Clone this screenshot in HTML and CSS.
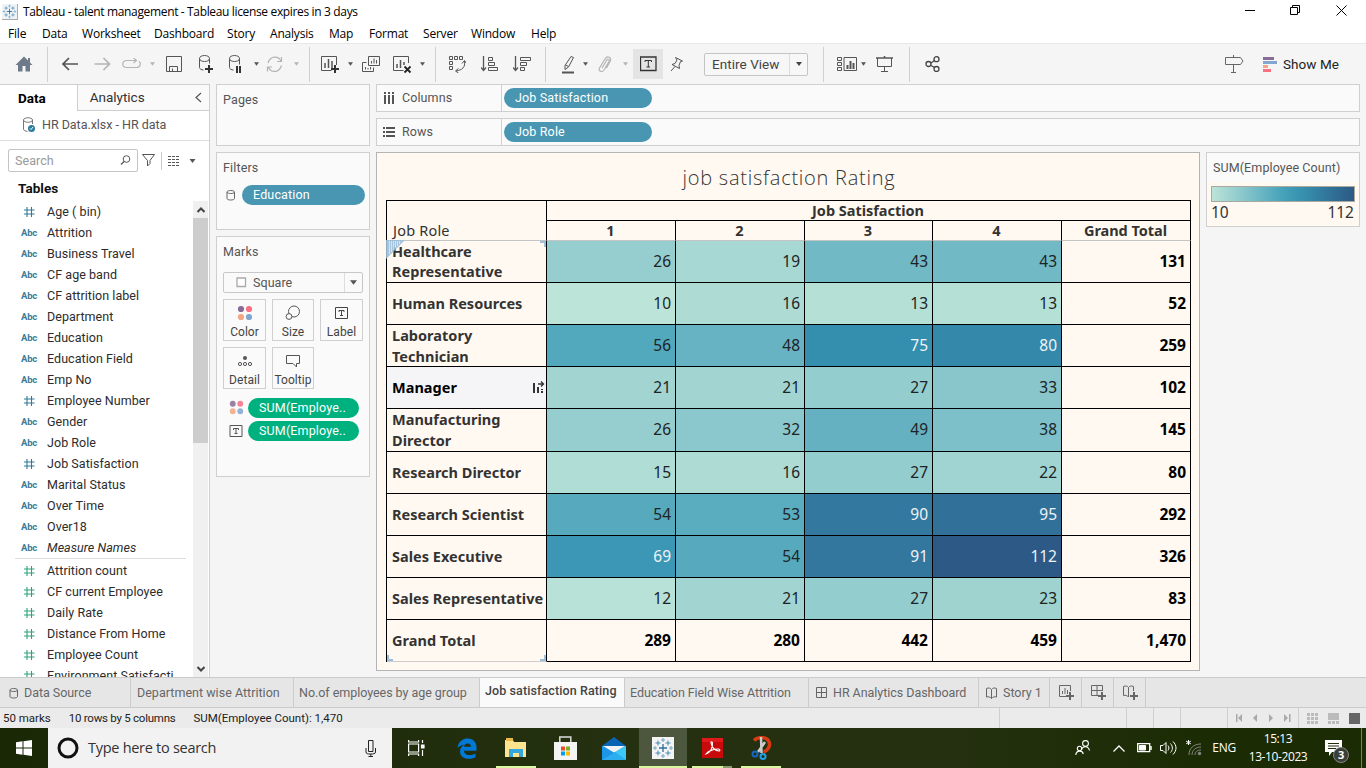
FILE: index.html
```html
<!DOCTYPE html>
<html lang="en">
<head>
<meta charset="utf-8">
<title>Tableau - talent management</title>
<link rel="stylesheet" href="styles.css">
</head>
<body>
<svg class="defs" width="0" height="0">
  <defs>
    <symbol id="caret" viewBox="0 0 6 4"><path d="M0 0h6L3 4z" fill="currentColor"/></symbol>
    <symbol id="hash" viewBox="0 0 12 12"><path d="M4 1v10M8.500 1v10M1 4h10.500M1 8h10.500" stroke="currentColor" fill="none" stroke-width="1.1"/></symbol>
    <symbol id="cyl" viewBox="0 0 10 12"><path d="M1 3v6.500c0 2 7.500 2 7.500 0V3M1 3c0-2 7.500-2 7.500 0s-7.500 2-7.500 0" stroke="currentColor" fill="none"/></symbol>
    <symbol id="dots" viewBox="0 0 16 16"><circle cx="4" cy="4" r="3.100" fill="#876d96"/><circle cx="12" cy="4" r="3.100" fill="#fa7082"/><circle cx="4" cy="12" r="3.100" fill="#f4a582"/><circle cx="12" cy="12" r="3.100" fill="#82a6d0"/></symbol>
    <symbol id="tbox" viewBox="0 0 14 12"><path d="M.5.5h12v11H.5z M4 5V3.500h5V5M6.500 3.500v5M5 8.500h3" stroke="currentColor" fill="none"/></symbol>
    <symbol id="grid4" viewBox="0 0 12 12"><path d="M.5.5h10v10H.5zM5.500.5v10M.5 5.500h10" stroke="currentColor" fill="none"/></symbol>
    <symbol id="book" viewBox="0 0 12 12"><path d="M.5 1.500c2-1 4-.5 5 1 1-1.500 3-2 5-1v8.500c-2-.5-4 0-5 1.500-1-1.500-3-2-5-1.500zM5.500 2.500v9" stroke="currentColor" fill="none"/></symbol>
    <symbol id="tabl" viewBox="0 0 22 22"><path d="M11 7v8M7 11h8" stroke="#2f6f98" stroke-width="1.300"/><path d="M6 3.500v5M3.500 6h5M16 3.500v5M13.500 6h5M6 13.500v5M3.500 16h5M16 13.500v5M13.500 16h5" stroke="#4a86b0"/><path d="M11 1v4M9 3h4M11 17v4M9 19h4M3 9v4M1 11h4M19 9v4M17 11h4" stroke="#74a6c4"/></symbol>
  </defs>
</svg>

<header class="titlebar">
  <svg class="applogo" width="16" height="16"><use href="#tabl" width="15" height="15"/></svg>
  <span class="apptitle">Tableau - talent management - Tableau license expires in 3 days</span>
  <svg class="winctl" width="106" height="16" fill="none" stroke="#000"><path d="M0 8.500h10M45.500 5.500h7v7h-7zM47.500 5.500v-2h7v7h-2"/><path d="M91.500 3.500l10 10M101.500 3.500l-10 10"/></svg>
</header>
<nav class="menubar"><span>File</span><span>Data</span><span>Worksheet</span><span>Dashboard</span><span>Story</span><span>Analysis</span><span>Map</span><span>Format</span><span>Server</span><span>Window</span><span>Help</span></nav>

<div class="toolbar">
  <div><svg width="18" height="16"><path d="M9 .5L.5 9H3v6.500h4.500V10h3v5.500H15V9h2.500L15 6.500V2h-2v2.500z" fill="#6d7a8a"/></svg></div>
  <div class="sep"></div>
  <div><svg width="17" height="14" fill="none" stroke="#555" stroke-width="1.700"><path d="M16 7H1M7 1L1 7l6 6"/></svg></div>
  <div class="faint"><svg width="17" height="14" fill="none" stroke="currentColor" stroke-width="1.700"><path d="M.5 7h15M9.500 1l6 6-6 6"/></svg></div>
  <div class="faint"><svg width="19" height="12" fill="none" stroke="currentColor" stroke-width="1.200"><path d="M11 2.500H4.500c-5 0-5 7 0 7h10c4.500 0 4.500-5 2.500-6M9 2.500h5M11.500 0l3 2.500-3 2.500"/></svg></div>
  <div class="faint"><svg width="5" height="4"><use href="#caret"/></svg></div>
  <div><svg width="17" height="17" fill="none" stroke="#555"><path d="M.5.500h15v15H.5zM3.500 15.500v-5h8v5M6.500 15.500v-3"/></svg></div>
  <div><svg width="16" height="18" fill="none" stroke="#555"><path d="M1.500 3.500c0-4 10-4 10 0s-10 4-10 0v9c0 1.500 2 2.500 4 2.500M11.500 3.500v5"/><path d="M11 10v8M7 14h8" stroke="#333" stroke-width="2"/></svg></div>
  <div><svg width="14" height="18" fill="none" stroke="#555"><path d="M1.500 3.500c0-4 10-4 10 0s-10 4-10 0v9c0 1.500 2 2.500 4 2.500M11.500 3.500v6"/><path d="M9 11v7M12 11v7" stroke="#333" stroke-width="2"/></svg></div>
  <div><svg width="5" height="4"><use href="#caret"/></svg></div>
  <div class="faint"><svg width="18" height="17" fill="none" stroke="currentColor" stroke-width="1.200"><path d="M2 7C4 0 12-1 15 5M15.500 1v4.500H11M15.500 9.500c-2 7-10 8-13 2M1.500 15.500V11H6"/></svg></div>
  <div class="faint"><svg width="5" height="4"><use href="#caret"/></svg></div>
  <div><i class="sep"></i></div>
  <div><svg width="20" height="19" fill="none" stroke="#555"><path d="M16.500 10V1.500H1.500v14h10"/><path d="M5 8v5M8.500 4v9M12 6v7" stroke-width="1.500"/><path d="M15 10v8M11 14h8" stroke="#333" stroke-width="2"/></svg></div>
  <div><svg width="5" height="4"><use href="#caret"/></svg></div>
  <div><svg width="18" height="17" fill="none" stroke="#555"><path d="M6.500.5h11v9h-11zM4.500 6.500H.5v9h11v-4M9.500 5v2.500M12 2.500v5M14.500 4v3.500M3.500 11v2.500M6 12v1.500M8.500 11v2.500"/></svg></div>
  <div><svg width="20" height="19" fill="none" stroke="#555"><path d="M16.500 8V1.500H1.500v14h10"/><path d="M5 9v4M8.500 5v8M12 7v3" stroke-width="1.500"/><path d="M12.500 11.500l6 6M18.500 11.500l-6 6" stroke="#222" stroke-width="1.800"/></svg></div>
  <div><svg width="5" height="4"><use href="#caret"/></svg></div>
  <div><i class="sep"></i></div>
  <div><svg width="17" height="17" fill="none" stroke="#555"><path d="M.5.5h3v3h-3zM5.500.5h3v3h-3zM10.500.5h3v3h-3zM.5 5.500h3v3h-3zM.5 10.500h3v3h-3zM15.500 5c1 6-2 9-8.500 10M13 7.500l2.500-3 2 3M9.500 12.500l-3 2.500 3 2"/></svg></div>
  <div><svg width="18" height="16" fill="none" stroke="#555"><path d="M2.500 0v14M0 11.500l2.500 3 2.500-3" stroke-width="1.300"/><path d="M7.500 1.500h4v3h-4zM7.500 6.500h6v3h-6zM7.500 11.500h9v3h-9z"/></svg></div>
  <div><svg width="18" height="16" fill="none" stroke="#555"><path d="M2.500 0v14M0 11.500l2.500 3 2.500-3" stroke-width="1.300"/><path d="M7.500 1.500h10v3h-10zM7.500 6.500h6v3h-6zM7.500 11.500h4v3h-4z"/></svg></div>
  <div><i class="sep"></i></div>
  <div><svg width="13" height="19" fill="none" stroke="#555"><path d="M9 1.500l2.500 1-5 9.500-3.500 2.500v-4zM3.500 10l3 1.500"/><path d="M0 17.500h12" stroke-width="2"/></svg></div>
  <div><svg width="5" height="4"><use href="#caret"/></svg></div>
  <div class="faint"><svg width="14" height="17" fill="none" stroke="currentColor" stroke-width="1.200"><path d="M4 12l4.500-7.500c1-2 3.500-1 2.500 1L6 14c-2 3-6 1-4.500-2L7 3c2.500-4 7-1.500 5 2.500L8.500 12"/></svg></div>
  <div class="faint"><svg width="5" height="4"><use href="#caret"/></svg></div>
  <div><span class="active"><svg width="17" height="16" fill="none" stroke="#333"><path d="M.5 1h15.500v13.500H.5z" stroke-width="1.300"/><path d="M5 6V4.500h6.500V6M8.300 4.500V11M6.500 11h3.500"/></svg></span></div>
  <div><svg width="14" height="16" fill="none" stroke="#555"><path d="M5.500 1.500l7 3.500-2 .5-1.500 4 .5 3-7.500-4 3-1L7 4zM5 10.500L1 15"/></svg></div>
  <div class="end"><span class="select"><span>Entire View</span><b><svg width="6" height="4"><use href="#caret"/></svg></b></span></div>
  <div><i class="sep"></i></div>
  <div><svg width="20" height="15" fill="none" stroke="#555"><path d="M.5.5h4v3h-4zM.5 5.500h4v3h-4zM.5 10.500h4v3h-4zM7 .5h12.500v13H7z"/><path d="M10.500 8v4M13.500 4v8M16.500 6v6" stroke-width="2"/></svg></div>
  <div><svg width="5" height="4"><use href="#caret"/></svg></div>
  <div><svg width="18" height="16" fill="none" stroke="#555"><path d="M0 2h17M8.500 0v2" stroke-width="1.500"/><path d="M1.500 2v8.500h14V2M8.500 10.500v5M5 15.500h7"/></svg></div>
  <div><i class="sep"></i></div>
  <div><svg width="15" height="16" fill="none" stroke="#444" stroke-width="1.300"><circle cx="3.500" cy="8" r="2.500"/><circle cx="11.500" cy="3.200" r="2.500"/><circle cx="11.500" cy="13" r="2.500"/><path d="M6 7l3.500-2.500M6 9.500l3.500 2"/></svg></div>
  <div></div>
  <div><svg width="19" height="18" fill="none" stroke="#666"><path d="M.5 2.500h15l2.500 3.500-2.500 3.500H.5zM8.500 0v2.500M8.500 9.500v8M6 17.500h5"/></svg></div>
  <div class="showme"><svg width="14" height="15"><path d="M0 0h11v3H0z" fill="#876d96"/><path d="M0 4h14v3H0z" fill="#82a6d0"/><path d="M0 8h5v3H0z" fill="#f4a582"/><path d="M0 12h8v3H0z" fill="#fa7082"/></svg><span>Show Me</span></div>
</div>

<main class="work">
  <aside class="side">
    <div class="sidetabs"><b>Data</b><span>Analytics</span><svg width="7" height="10" fill="none" stroke="#555" stroke-width="1.200"><path d="M7 0L2 4.500 7 9"/></svg></div>
    <div class="source"><svg width="15" height="16" fill="none" stroke="#777"><path d="M1.500 3c0-3 9-3 9 0s-9 3-9 0v9c0 1.500 2 2 4 2.500M10.500 3v4"/><circle cx="9.500" cy="11.500" r="3.500" fill="#2f7d9e" stroke="none"/><path d="M8 11.500l1 1 2-2.500" stroke="#fff"/></svg><span>HR Data.xlsx - HR data</span></div>
    <div class="searchrow"><div class="search"><span>Search</span><svg width="11" height="11" fill="none" stroke="#555"><circle cx="6.500" cy="4" r="3.300"/><path d="M4 6.500L1 9.500" stroke-width="1.200"/></svg></div>
      <svg class="funnel" width="14" height="13" fill="none" stroke="#555"><path d="M.5.5h12L8 6.500v3L5.500 12V6.500z"/></svg><i></i>
      <svg class="lines" width="12" height="10" stroke="#555"><path d="M0 .5h12M0 3.500h12M0 6.500h12M0 9.500h12" stroke-dasharray="3 1"/></svg><svg class="lc" width="7" height="4"><use href="#caret" width="7" height="4"/></svg></div>
    <h3>Tables</h3>
    <div class="fields">
      <div class="list">
        <p><svg><use href="#hash"/></svg>Age ( bin)</p>
        <p><i>Abc</i>Attrition</p>
        <p><i>Abc</i>Business Travel</p>
        <p><i>Abc</i>CF age band</p>
        <p><i>Abc</i>CF attrition label</p>
        <p><i>Abc</i>Department</p>
        <p><i>Abc</i>Education</p>
        <p><i>Abc</i>Education Field</p>
        <p><i>Abc</i>Emp No</p>
        <p><svg><use href="#hash"/></svg>Employee Number</p>
        <p><i>Abc</i>Gender</p>
        <p><i>Abc</i>Job Role</p>
        <p><svg><use href="#hash"/></svg>Job Satisfaction</p>
        <p><i>Abc</i>Marital Status</p>
        <p><i>Abc</i>Over Time</p>
        <p><i>Abc</i>Over18</p>
        <p><i>Abc</i><em>Measure Names</em></p>
        <div class="rule"></div>
        <p class="g"><svg><use href="#hash"/></svg>Attrition count</p>
        <p class="g"><svg><use href="#hash"/></svg>CF current Employee</p>
        <p class="g"><svg><use href="#hash"/></svg>Daily Rate</p>
        <p class="g"><svg><use href="#hash"/></svg>Distance From Home</p>
        <p class="g"><svg><use href="#hash"/></svg>Employee Count</p>
        <p class="g"><svg><use href="#hash"/></svg>Environment Satisfacti</p>
      </div>
      <div class="scroll"><div class="sbtn"><svg width="8" height="6" fill="none" stroke="#444" stroke-width="2"><path d="M.5 5L4 1.500 7.500 5"/></svg></div><div class="thumb"></div><div class="sbtn last"><svg width="8" height="6" fill="none" stroke="#444" stroke-width="2"><path d="M.5 1L4 4.500 7.500 1"/></svg></div></div>
    </div>
  </aside>

  <section class="cards">
    <div class="card pages"><h4>Pages</h4></div>
    <div class="card filters"><h4>Filters</h4><div class="frow"><svg width="10" height="12"><use href="#cyl"/></svg><span class="pill">Education</span></div></div>
    <div class="card marks"><h4>Marks</h4>
      <div class="marktype"><svg width="11" height="11"><path d="M1 1h8.500v8.500H1z" fill="#fff" stroke="#aaa" stroke-width="1.300"/></svg><span>Square</span><b><svg width="7" height="5" viewBox="0 0 6 4"><path d="M0 0h6L3 4z" fill="#555"/></svg></b></div>
      <div class="btns">
        <div><svg width="16" height="16"><use href="#dots"/></svg><span>Color</span></div>
        <div><svg width="16" height="16" fill="none" stroke="#555"><circle cx="9" cy="6.500" r="5.500"/><circle cx="4" cy="11.500" r="2.900" fill="#fafafa"/></svg><span>Size</span></div>
        <div><svg width="14" height="16" viewBox="0 -2 14 16"><use href="#tbox" width="14" height="12"/></svg><span>Label</span></div>
        <div><svg width="16" height="16" fill="none" stroke="#555"><circle cx="8" cy="5" r="2" fill="#555" stroke="none"/><circle cx="3" cy="11" r="1.600"/><circle cx="8" cy="11" r="1.600"/><circle cx="13" cy="11" r="1.600"/></svg><span>Detail</span></div>
        <div><svg width="16" height="16" fill="none" stroke="#555"><path d="M1.500 2.500h13v8h-3v3.500L8 10.500H1.500z"/></svg><span>Tooltip</span></div>
      </div>
      <div class="mrow"><svg width="15" height="15" opacity=".85"><use href="#dots"/></svg><span class="pill green">SUM(Employe..</span></div>
      <div class="mrow"><svg width="14" height="12"><use href="#tbox"/></svg><span class="pill green">SUM(Employe..</span></div>
    </div>
  </section>

  <section class="sheet">
    <div class="shelf"><div class="shelflabel"><svg width="12" height="12" stroke="#555" stroke-width="2"><path d="M2 0v2M6 0v2M10 0v2M2 3v9M6 3v9M10 3v9"/></svg>Columns</div><span class="pill">Job Satisfaction</span></div>
    <div class="shelf"><div class="shelflabel"><svg width="12" height="12" stroke="#555" stroke-width="2"><path d="M0 2h2M3 2h9M0 6h2M3 6h9M0 10h2M3 10h9"/></svg>Rows</div><span class="pill">Job Role</span></div>
    <div class="lower">
      <div class="viz">
        <h1>job satisfaction Rating</h1>
        <div class="xtab">
          <div class="corner">Job Role</div><div class="head top">Job Satisfaction</div>
          <div class="head">1</div><div class="head">2</div><div class="head">3</div><div class="head">4</div><div class="head">Grand Total</div>
          <div class="row first"><svg class="sel" width="20" height="20"><path d="M0 0h19L0 19z" fill="#9dbfdc"/><path d="M3.500 1v13M5.500 1v11M7.500 1v9M9.500 1v7M11.500 1v5M13.500 1v3" stroke="#d2e2ef"/></svg><span class="mk tr"></span>Healthcare<br>Representative</div><div class="c v26">26</div><div class="c v19">19</div><div class="c v43">43</div><div class="c v43">43</div><div class="t">131</div>
          <div class="row">Human Resources</div><div class="c v10">10</div><div class="c v16">16</div><div class="c v13">13</div><div class="c v13">13</div><div class="t">52</div>
          <div class="row two">Laboratory<br>Technician</div><div class="c v56">56</div><div class="c v48">48</div><div class="c w v75">75</div><div class="c w v80">80</div><div class="t">259</div>
          <div class="row hov">Manager<svg width="14" height="14" stroke="#333" stroke-width="2" fill="none"><path d="M2 2v10M6 6v6M10 8v1M10 10v2"/><path d="M6 3h5M9 .5L11.500 3 9 5.500" stroke-width="1.300"/></svg></div><div class="c v21">21</div><div class="c v21">21</div><div class="c v27">27</div><div class="c v33">33</div><div class="t">102</div>
          <div class="row two">Manufacturing<br>Director</div><div class="c v26">26</div><div class="c v32">32</div><div class="c v49">49</div><div class="c v38">38</div><div class="t">145</div>
          <div class="row">Research Director</div><div class="c v15">15</div><div class="c v16">16</div><div class="c v27">27</div><div class="c v22">22</div><div class="t">80</div>
          <div class="row">Research Scientist</div><div class="c v54">54</div><div class="c v53">53</div><div class="c w v90">90</div><div class="c w v95">95</div><div class="t">292</div>
          <div class="row">Sales Executive</div><div class="c w v69">69</div><div class="c v54">54</div><div class="c w v91">91</div><div class="c w v112">112</div><div class="t">326</div>
          <div class="row">Sales Representative</div><div class="c v12">12</div><div class="c v21">21</div><div class="c v27">27</div><div class="c v23">23</div><div class="t">83</div>
          <div class="row lastrow">Grand Total<span class="mk br"></span><span class="mk bl"></span></div><div class="t">289</div><div class="t">280</div><div class="t">442</div><div class="t">459</div><div class="t">1,470</div>
        </div>
      </div>
      <div class="legend"><h4>SUM(Employee Count)</h4><div class="ramp"></div><div class="ends"><span>10</span><span>112</span></div></div>
    </div>
  </section>
</main>

<div class="tabs">
  <div><svg width="10" height="12"><use href="#cyl"/></svg><span>Data Source</span></div>
  <div>Department wise Attrition</div>
  <div>No.of employees by age group</div>
  <div class="on">Job satisfaction Rating</div>
  <div>Education Field Wise Attrition</div>
  <div><svg width="12" height="12"><use href="#grid4"/></svg><span>HR Analytics Dashboard</span></div>
  <div><svg width="12" height="12"><use href="#book"/></svg><span>Story 1</span></div>
  <div class="ic"><svg width="16" height="16" fill="none" stroke="#666"><path d="M11.500 6V.5H.5v11h7M3.500 6v3M6 3v6M8.500 5v4"/><path d="M11 7v8M7 11h8" stroke-width="2"/></svg></div>
  <div class="ic"><svg width="16" height="16" fill="none" stroke="#666"><path d="M11.500 6V.5H.5v10h7M6 .5v10M.5 5.500h11"/><path d="M11 7v8M7 11h8" stroke-width="2"/></svg></div>
  <div class="ic"><svg width="16" height="16" fill="none" stroke="#666"><path d="M5.500 12c-1-1.500-3-2-5-1.500v-9c2-1 4-.5 5 1 1-1.500 3-2 5-1V6M5.500 2.500V12"/><path d="M11 7v8M7 11h8" stroke-width="2"/></svg></div>
</div>

<div class="status"><div class="msgs"><span>50 marks</span><span class="rc">10 rows by 5 columns</span><span>SUM(Employee Count): 1,470</span></div><div></div><div></div><div></div><div></div>
  <div class="nav"><svg width="55" height="8" fill="#aaa"><path d="M0 0h1.500v8H0zM6 0v8L2 4zM21 0v8l-4-4zM33 0v8l4-4zM48 0v8l4-4zM53 0h1.500v8H53z"/></svg></div>
  <div class="views"><svg width="53" height="11"><path d="M0 0h3v3H0zM4 0h3v3H4zM8 0h3v3H8zM0 4h3v3H0zM4 4h3v3H4zM8 4h3v3H8zM0 8h3v3H0zM4 8h3v3H4zM8 8h3v3H8zM21 0h11v7H21zM21 8h3v3h-3zM25 8h3v3h-3zM29 8h3v3h-3z" fill="#bbb"/><path d="M42 0h11v11H42z" fill="#666"/></svg></div>
</div>

<footer class="task">
  <div class="start"><svg width="16" height="16" fill="#fff"><path d="M0 2.200L6.500 1.300V7.500H0zM7.500 1.200L16 0v7.500H7.500zM0 8.500h6.500v6.200L0 13.800zM7.500 8.500H16V16l-8.500-1.200z"/></svg></div>
  <div class="find"><svg width="22" height="22" fill="none"><circle cx="11" cy="11" r="9" stroke="#111" stroke-width="3"/></svg><span>Type here to search</span><svg width="12" height="17" fill="none" stroke="#222"><path d="M3.500.500h4.500v11H3.500zM1 8v4c0 2 2 2 4.500 2s5 0 5-2V8M5.800 14v2.500M3.500 16.500h4.500"/></svg></div>
  <div class="app view"><svg width="17" height="16" fill="none" stroke="#fff" stroke-width="1.200"><path d="M.6 4h10v8H.6zM.6 0v2h10V0M.6 16v-2h10v2M14.500 0v3M14.500 10v6"/><path d="M13.500 5h2.500v3h-2.500z" fill="#fff"/></svg></div>
  <div class="app"><svg width="20" height="21"><path d="M.5 10C1.500 3 6 .5 10.500.5c6 0 9 4 9 9v3.200H7c.2 5 7 5.500 11.500 2.800v3.700C12 22.500 3 21 3 13.500c0-3.500 2-5.700 4.500-7C5 7 2 8 .5 10zM7 8.700h7C14 4.500 7.500 4.500 7 8.700z" fill="#0078d7"/></svg></div>
  <div class="app run"><svg width="22" height="20"><path d="M0 2h8l1 2h12v15H0z" fill="#ffe48f"/><path d="M1 0h7v3H1z" fill="#e9b949"/><path d="M4 18v-7h14v8h-4v-4H8v4H4z" fill="#35a7df"/></svg></div>
  <div class="app"><svg width="23" height="24" fill="none"><path d="M5.800 7V1h11v6" stroke="#ddd" stroke-width="1.500"/><path d="M0 6h23v18H0z" fill="#f4f4f4"/><path d="M7 10.500h4v4H7z" fill="#e74c2c"/><path d="M12 10.500h4v4h-4z" fill="#78b020"/><path d="M7 15.500h4v4H7z" fill="#00a2e8"/><path d="M12 15.500h4v4h-4z" fill="#ffb900"/></svg></div>
  <div class="app"><svg width="24" height="23"><path d="M0 9L12 0l12 9v1H0z" fill="#0a64b6"/><path d="M0 9h24v14H0z" fill="#1e96e6"/><path d="M24 9v14L12 15z" fill="#3cc8f4"/><path d="M1 9h22l-11 6.500z" fill="#f3f3f3"/><path d="M0 23l13-8 11 8z" fill="#2badf0"/></svg></div>
  <div class="app cur"><svg width="22" height="22"><path d="M0 0h22v22H0z" fill="#f4f4f4"/><use href="#tabl"/></svg></div>
  <div class="app run part"><svg width="21" height="20" fill="none"><path d="M0 0h21v20H0z" fill="#c80a0a"/><path d="M0 0h21v4H0z" fill="#e01a1a"/><path d="M4 16c4-1 7-6 6.500-11 0-1.500-2-1.500-1.500 0 .5 4 4 8 8 8 1.500 0 1-2-1-2-4 0-10 2-12 5z" stroke="#fff" stroke-width="1.100"/></svg></div>
  <div class="app run"><svg width="21" height="24" fill="none"><path d="M3 4.500C6 1 14 .5 17 4c3.500 5 .5 10-4.500 12" stroke="#d83b14" stroke-width="3.500"/><path d="M10 1l.5 16M14 6l-7 10" stroke="#ccc" stroke-width="2.500"/><circle cx="4" cy="18" r="2.500" stroke="#1368c4" stroke-width="2"/><circle cx="12" cy="20.500" r="2.500" stroke="#22a0ea" stroke-width="2"/></svg></div>
  <div class="tray">
    <svg width="16" height="16" fill="none" stroke="#fff" stroke-width="1.100"><circle cx="10.500" cy="3.500" r="2.900"/><path d="M6.500 10c1-4.500 7-4.500 8 .5"/><circle cx="4.500" cy="8.500" r="2.200"/><path d="M.8 15c.5-5 6.500-5 7.500-1"/></svg>
    <svg class="t2" width="12" height="7" fill="none" stroke="#fff" stroke-width="1.300"><path d="M.5 6.500L6 1l5.500 5.500"/></svg>
    <svg class="t3" width="15" height="10" fill="none" stroke="#fff"><path d="M.7.7h12v8H.7z" stroke-width="1.300"/><path d="M2.500 2.500h6v4.500h-6z" fill="#fff"/><path d="M14 3v4" stroke-width="1.500"/></svg>
    <svg class="t4" width="17" height="14" fill="none" stroke="#fff"><path d="M.5 4.500h2.500l3-3v11l-3-3H.5zM8 4.500c1.200 1.500 1.200 3.500 0 5M10.500 2.500c2.500 3 2.500 6.500 0 9M13 .5c4 4 4 9 0 13"/></svg>
    <svg class="t5" width="16" height="16" fill="none" stroke="#888"><path d="M3 15C3 8 8 4 15 4M6 15c0-5 4-8 9-8M9 15c0-3 2-5 6-5"/><circle cx="13.500" cy="13.500" r="1.300" fill="#888"/><path d="M2.500 0v5M.2 1.200l4.600 2.600M.2 3.800l4.600-2.600" stroke="#fff"/></svg>
    <span class="eng">ENG</span>
    <div class="clock"><span>15:13</span><span>13-10-2023</span></div>
    <div class="note"><svg width="17" height="17"><path d="M0 0h17v12H7l-3 4v-4H0z" fill="#fff"/><path d="M3 3.500h11M3 6h11M3 8.500h8" stroke="#223008"/></svg><b>3</b></div>
  </div>
</footer>
</body>
</html>
```
FILE: styles.css
```css
* { box-sizing: border-box; }
body { margin: 0; width: 1366px; height: 768px; overflow: hidden; display: flex; flex-direction: column; background: #f5f5f5; font: 12.500px/16px Roboto, sans-serif; color: #333; letter-spacing: .05px; }
h1, h3, h4, p { margin: 0; font-weight: 400; }
svg { display: block; flex: none; }
.defs { position: absolute; }
i, em { font-style: normal; }

.titlebar { height: 23px; flex: none; background: #fff; display: flex; align-items: center; padding-left: 2px; font: 12px/16px "Open Sans", sans-serif; color: #000; letter-spacing: -.35px; }
.applogo { border-right: 1px solid #aaa; border-bottom: 1px solid #aaa; background: #eef3f6; }
.apptitle { margin-left: 5px; }
.winctl { margin-left: auto; margin-right: 15px; margin-top: -4px; }
.menubar { height: 20px; flex: none; background: #fff; display: grid; grid-template-columns: 34px 40px 72px 73px 43px 59px 40px 54px 48px 60px 60px; padding-left: 8px; font: 12px/21px "Open Sans", sans-serif; color: #000; letter-spacing: -.2px; }

.toolbar { height: 41px; flex: none; border-top: 1px solid #e8e8e8; display: grid; grid-template-columns: 47px 1px 44px 20px 38px 5px 38px 26px 32px 10px 28px 14px 12px 30px 10px 32px 30px 10px 16px 28px 38px 26px 20px 26px 8px 32px 8px 38px 20px 121px 30px 17px 16px 28px 20px 26px 1fr 36px 114px; color: #555; }
.toolbar > div { display: flex; align-items: center; justify-content: center; min-width: 0; }
.toolbar .faint { color: #b4b4b4; }
.sep { width: 1px; height: 35px; background: #cfcfcf; align-self: center; flex: none; }
.active { width: 30px; height: 30px; background: #e4e4e4; display: flex; align-items: center; justify-content: center; flex: none; }
.toolbar .end { justify-content: flex-end; }
.select { width: 104px; height: 23px; border: 1px solid #c4c4c4; border-radius: 2px; display: flex; font-size: 13.500px; line-height: 21px; color: #444; background: #f7f7f7; padding-left: 7px; }
.select b { margin-left: auto; width: 18px; border-left: 1px solid #ddd; display: flex; align-items: center; justify-content: center; }
.toolbar .showme { justify-content: flex-start; padding-left: 11px; gap: 6px; font-size: 13.500px; color: #222; }

.work { height: 593px; flex: none; display: flex; }
.side { width: 210px; border-right: 1px solid #cfcfcf; border-top: 1px solid #cfcfcf; background: #fff; display: flex; flex-direction: column; overflow: hidden; }
.sidetabs { height: 26px; flex: none; display: flex; align-items: center; font-size: 13.500px; letter-spacing: 0; color: #333; }
.sidetabs b { width: 77px; padding-left: 18px; color: #000; }
.sidetabs span { width: 118px; height: 26px; line-height: 25px; padding-left: 12px; border-left: 1px solid #cfcfcf; border-bottom: 1px solid #cfcfcf; background: #fafafa; }
.sidetabs svg { width: 15px; height: 26px; padding: 8px 6px 8px 0; border-bottom: 1px solid #cfcfcf; background: #fafafa; overflow: visible; }
.source { height: 30px; flex: none; border-bottom: 1px solid #ddd; display: flex; align-items: center; padding: 0 0 1px 22px; gap: 5px; color: #555; letter-spacing: -.03px; }
.searchrow { display: flex; align-items: center; margin: 8px 0 0 8px; height: 23px; flex: none; }
.search { width: 130px; height: 23px; border: 1px solid #c4c4c4; border-radius: 2px; display: flex; align-items: center; justify-content: space-between; padding: 0 6px; color: #999; }
.funnel { margin-left: 4px; }
.searchrow i { width: 1px; height: 18px; background: #ccc; margin-left: 5px; }
.lines { margin-left: 6px; }
.lc { margin-left: 9px; color: #555; }
.side h3 { font-size: 13.500px; font-weight: 700; color: #111; padding-left: 18px; margin-top: 8px; line-height: 16px; height: 21px; flex: none; }
.fields { flex: 1; min-height: 0; display: flex; justify-content: space-between; overflow: hidden; }
.list { width: 193px; flex: none; }
.list p { height: 21px; display: flex; align-items: center; white-space: nowrap; color: #2c2c2c; }
.list p > svg { width: 12px; height: 12px; margin: 0 12px 0 23px; color: #2f7a97; }
.list p.g > svg { color: #2da37c; }
.list p > i { width: 26px; margin-left: 21px; font-size: 9.500px; font-weight: 700; color: #3d7b97; letter-spacing: -.2px; padding-top: 1px; }
.list em { font-style: italic; }
.rule { height: 1px; background: #ddd; margin: 0 7px 1px 15px; }
.scroll { width: 15px; background: #f0f0f0; display: flex; flex-direction: column; flex: none; margin-right: 1px; }
.sbtn { height: 17px; display: flex; align-items: center; justify-content: center; }
.thumb { height: 225px; background: #cdcdcd; }
.last { margin-top: auto; }

.cards { width: 154px; margin-left: 6px; display: flex; flex-direction: column; gap: 6px; flex: none; }
.card { border: 1px solid #cfcfcf; background: #fafafa; color: #555; }
.card h4, .legend h4 { font-size: 12.500px; line-height: 16px; padding: 7px 6px 0; color: #555; letter-spacing: .15px; }
.pages { height: 62px; }
.filters { height: 78px; }
.marks { height: 241px; }
.frow { display: flex; align-items: center; margin-top: 9px; padding-left: 9px; gap: 6px; color: #666; }
.pill { height: 20px; width: 148px; border-radius: 10px; background: #4996b2; color: #fff; line-height: 20px; padding-left: 11px; font-size: 12.500px; letter-spacing: .15px; }
.frow .pill { width: 123px; }
.marktype { margin: 12px 6px 0; height: 21px; border: 1px solid #c8c8c8; border-radius: 2px; display: flex; align-items: center; padding-left: 12px; gap: 6px; }
.marktype b { margin-left: auto; width: 18px; align-self: stretch; border-left: 1px solid #ddd; display: flex; align-items: center; justify-content: center; }
.btns { display: grid; grid-template-columns: 43px 42px 43px; gap: 6px; margin: 6px 6px 0; }
.btns > div { height: 42px; border: 1px solid #cfcfcf; display: flex; flex-direction: column; align-items: center; color: #444; padding-top: 5px; gap: 3px; font-size: 12px; }
.mrow { display: flex; align-items: center; height: 23px; padding-left: 12px; gap: 4px; }
.btns + .mrow { margin-top: 7px; }
.mrow svg { width: 15px; }
.mrow .pill { width: 111px; }
.green { background: #00b180; }

.sheet { flex: 1; margin: 0 6px 0 6px; display: flex; flex-direction: column; }
.shelf { height: 28px; border: 1px solid #cfcfcf; background: #fafafa; display: flex; align-items: center; margin-bottom: 6px; flex: none; }
.shelflabel { width: 125px; height: 26px; border-right: 1px solid #cfcfcf; display: flex; align-items: center; gap: 7px; padding-left: 6px; color: #555; letter-spacing: .1px; }
.shelf .pill { margin-left: 2px; }
.lower { display: flex; gap: 6px; align-items: flex-start; }
.viz { width: 824px; height: 519px; border: 1px solid #b4b4b4; background: #fff9f1; padding-left: 9px; }
.viz h1 { font: 300 20px/30px "Open Sans", sans-serif; letter-spacing: .75px; text-align: center; height: 47px; padding: 10px 7px 0 0; color: #333; }
.xtab { display: grid; width: 805px; grid-template-columns: 160px 129px 129px 128px 129px 129px; grid-template-rows: 20px 20px 42px 42px 42px 42px 43px 42px 42px 42px 42px 42px; border: solid #000; border-width: 1px 0 0 1px; font: 15px/21px "Noto Sans", sans-serif; letter-spacing: 0; }
.xtab > div { border: solid #000; border-width: 0 1px 1px 0; }
.xtab .corner { grid-row: span 2; border-bottom-color: #c4c4c4; display: flex; align-items: flex-end; padding-left: 6px; font-size: 14.500px; line-height: 19px; letter-spacing: .2px; }
.xtab .head { text-align: center; font-weight: 700; font-size: 14.500px; line-height: 19px; letter-spacing: -.03px; border-bottom-color: #c4c4c4; color: #333; padding-right: 1px; }
.xtab .top { grid-column: span 5; border-bottom-color: #000; }
.row { font-weight: 700; font-size: 14.500px; letter-spacing: .02px; padding-left: 5px; display: flex; align-items: center; position: relative; color: #333; white-space: nowrap; }
.row.two, .row.first { display: block; }
.row.first { line-height: 20px; }
.sel { position: absolute; left: -1px; top: -1px; opacity: .9; }
.mk { position: absolute; width: 6px; height: 6px; border: 0 solid #9dbfdc; }
.tr { right: 0; top: 0; border-width: 2px 2px 0 0; }
.br { right: 0; bottom: 0; border-width: 0 2px 2px 0; }
.bl { left: 0; bottom: 0; border-width: 0 0 2px 2px; }
.hov { background: #f5f5f8; color: #000; justify-content: space-between; }
.xtab .lastrow { border-bottom-color: #ccc; }
.c, .t { text-align: right; padding-right: 4px; line-height: 41px; font-size: 15.500px; color: #1c2426; }
.t { font-weight: 700; color: #000; font-size: 15.500px; }
.c.w { color: #eef3f6; }
.v10 { background: #bce4d8; } .v12 { background: #b8e2d7; } .v13 { background: #b5e0d6; } .v15 { background: #b0ddd5; }
.v16 { background: #aedcd5; } .v19 { background: #a7d8d3; } .v21 { background: #a2d5d2; } .v22 { background: #a0d4d2; }
.v23 { background: #9ed3d0; } .v26 { background: #96cecf; } .v27 { background: #94cdce; } .v32 { background: #8bc8cd; }
.v33 { background: #89c6cc; } .v38 { background: #7dc0c9; } .v43 { background: #72b9c6; } .v48 { background: #67b2c3; }
.v49 { background: #65b1c2; } .v53 { background: #5aacbf; } .v54 { background: #57aabe; } .v56 { background: #52a8bd; }
.v69 { background: #3b97b5; } .v75 { background: #348eae; } .v80 { background: #3488a9; } .v90 { background: #33789f; }
.v91 { background: #33779f; } .v95 { background: #317199; } .v112 { background: #2c5985; }

.legend { width: 154px; height: 75px; border: 1px solid #cfcfcf; background: linear-gradient(#fafafa 29px, #fff9f1 29px); }
.legend h4 { letter-spacing: .1px; }
.ramp { height: 16px; margin: 10px 4px 0; border: 1px solid #a9a9a0; background: linear-gradient(90deg, #bce4d8, #7dc0c9 27%, #45a2b9 50%, #3690ae 64%, #2c5985); }
.ends { display: flex; justify-content: space-between; padding: 0 5px 0 4px; font: 15.500px/21px "Noto Sans", sans-serif; letter-spacing: 0; }

.tabs { height: 31px; flex: none; background: #e6e6e6; border: solid #cbcbcb; border-width: 1px 0; display: grid; grid-template-columns: 131px 163px 186px 145px 184px 170px 71px 32px 32px 32px; color: #666; }
.tabs > div { border-right: 1px solid #cbcbcb; display: flex; align-items: center; padding-left: 6px; gap: 4px; white-space: nowrap; letter-spacing: -.04px; }
.tabs > div:first-child { padding-left: 9px; gap: 5px; }
.tabs > div:nth-child(2) { letter-spacing: .02px; }
.tabs > div:nth-child(3) { padding-left: 5px; }
.tabs > div:nth-child(5) { padding-left: 5px; letter-spacing: -.08px; }
.tabs > div:nth-child(6) { padding-left: 7px; gap: 5px; }
.tabs > div:nth-child(7) { padding-left: 7px; gap: 5px; }
.tabs .on { background: #fafafa; font-weight: 500; padding: 0 0 3px 5px; color: #444; letter-spacing: .1px; }
.tabs .ic { padding: 0 0 0 9px; }

.status { height: 20px; flex: none; background: #ebebeb; display: grid; grid-template-columns: 1000px 127px 27px 27px 47px 71px 1fr; font-size: 11.500px; color: #222; letter-spacing: 0; }
.status > div { border-right: 1px solid #cfcfcf; display: flex; align-items: center; }
.status .msgs { gap: 18px; padding-left: 3px; }
.status .rc { letter-spacing: -.25px; }
.status .nav { padding-left: 8px; }
.status .views { padding-left: 8px; border: 0; }

.task { height: 40px; flex: none; background: linear-gradient(90deg, #1a2806, #24300f 45%, #24300f 70%, #1b2c04 88%, #1b2c04); display: flex; color: #fff; font: 12px/16px "Open Sans", sans-serif; letter-spacing: -.2px; }
.start { width: 48px; display: flex; align-items: center; justify-content: center; }
.find { width: 344px; background: #f2f2f2; color: #333; display: flex; align-items: center; padding: 0 15px 0 9px; font-size: 14.500px; letter-spacing: -.28px; }
.find span { flex: 1; padding-left: 9px; }
.app { width: 48px; margin-right: 1px; display: flex; align-items: center; justify-content: center; }
.view { margin-right: 3px; }
.run { background: linear-gradient(#d9f7a0, #d9f7a0) center bottom / 40px 2px no-repeat; }
.part { background-image: linear-gradient(90deg, #d9f7a0 31px, #8a9c6c 31px); }
.cur { background: #4d573e; box-shadow: inset 0 -2px #d9f7a0; }
.tray { margin-left: auto; display: flex; align-items: center; }
.t2 { margin-left: 22px; } .t3 { margin-left: 12px; } .t4 { margin-left: 8px; } .t5 { margin-left: 9px; }
.eng { margin-left: 10px; }
.clock { margin-left: 12px; width: 60px; display: flex; flex-direction: column; align-items: center; line-height: 18px; white-space: nowrap; letter-spacing: -.4px; }
.note { margin-left: 17px; width: 37px; height: 40px; border-right: 1px solid #77806a; margin-right: 4px; padding-top: 12px; position: relative; }
.note b { position: absolute; left: 8px; top: 19px; width: 16px; height: 16px; border-radius: 50%; background: #3a4038; border: 1px solid #888; font-size: 11px; line-height: 14px; text-align: center; }
```
